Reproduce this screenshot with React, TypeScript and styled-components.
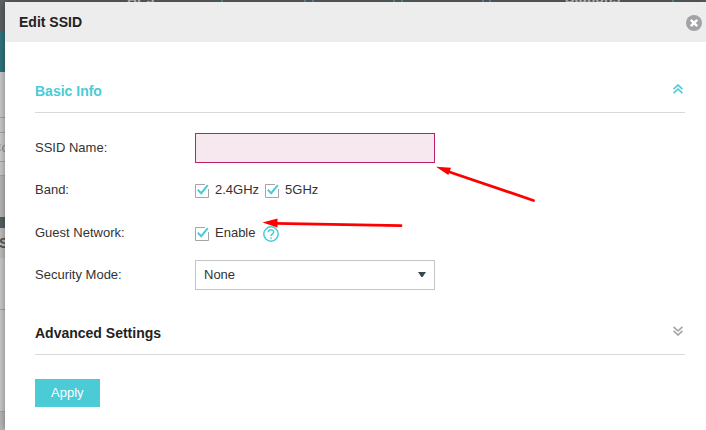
import React, { useState } from "react";
import styled, { createGlobalStyle } from "styled-components";

const accent = "#4acbd6";

const GlobalStyle = createGlobalStyle`
  *, *::before, *::after { box-sizing: border-box; }
  body {
    margin: 0;
    background: #c3c3c3;
    color: #333;
    font: 13px/16px "Liberation Sans", Arial, sans-serif;
  }
`;

const Page = styled.div`
  position: relative;
  min-height: 100vh;
  overflow: hidden;
  padding: 2px 0 0 5px;
`;

const Backdrop = styled.div`
  position: absolute;
  inset: 0;
  overflow: hidden;
  display: flex;
  flex-direction: column;
`;

const Strip = styled.div<{ $height: number; $color: string; $line?: boolean }>`
  flex: none;
  height: ${(p) => p.$height}px;
  background: ${(p) => p.$color};
  border-bottom: ${(p) => (p.$line ? "1px solid #a6a6a6" : "0")};
  overflow: hidden;
`;

const Status = styled(Strip)`
  position: relative;
`;

const StatusLabel = styled.span<{ $left: number }>`
  position: absolute;
  left: ${(p) => p.$left}px;
  bottom: 26px;
  color: #d0d0d0;
  font-size: 14px;
  font-weight: bold;
`;

const Tick = styled.span<{ $left: number }>`
  position: absolute;
  left: ${(p) => p.$left}px;
  top: 0;
  width: 2px;
  height: 2px;
  background: #5a9a9f;
`;

const Clipped = styled.span<{ $bold?: boolean }>`
  display: block;
  margin-left: ${(p) => (p.$bold ? -1 : -8)}px;
  padding-top: 7px;
  color: ${(p) => (p.$bold ? "#555" : "#8a8a8a")};
  font-size: ${(p) => (p.$bold ? 14 : 13)}px;
  font-weight: ${(p) => (p.$bold ? "bold" : "normal")};
`;

const Dialog = styled.section`
  position: relative;
  min-height: calc(100vh - 2px);
  background: #fff;
  box-shadow: 0 0 8px rgba(0, 0, 0, 0.4);
`;

const DialogHeader = styled.header`
  display: flex;
  align-items: center;
  justify-content: space-between;
  height: 40px;
  padding: 0 4px 0 14px;
  background: #ededed;
`;

const DialogTitle = styled.h1`
  margin: 0;
  color: #222;
  font-size: 14px;
  line-height: 16px;
`;

const IconButton = styled.button`
  display: flex;
  margin: 1px 0 0;
  padding: 0;
  border: 0;
  background: none;
  cursor: pointer;
`;

const Form = styled.form`
  padding: 29px 21px 22px 30px;
`;

const SectionHeader = styled.div`
  display: flex;
  align-items: flex-start;
  justify-content: space-between;
  height: 42px;
  padding: 12px 2px 0 0;
  border-bottom: 1px solid #d9d9d9;
`;

const SectionTitle = styled.h2<{ $open?: boolean }>`
  margin: 0;
  color: ${(p) => (p.$open ? accent : "#222")};
  font-size: 14px;
  line-height: 16px;
`;

const Fields = styled.div`
  display: grid;
  gap: 12px;
  padding: 20px 0 23px;
`;

const Row = styled.div`
  display: flex;
  align-items: center;
  min-height: 30px;
`;

const HelpRow = styled(Row)`
  padding-top: 1px;
  min-height: 31px;
`;

const RowLabel = styled.label`
  flex: none;
  width: 160px;
`;

const TextInput = styled.input`
  width: 240px;
  height: 30px;
  padding: 0 8px;
  border: 1px solid #c01f6a;
  border-radius: 0;
  outline: 0;
  background: #f7e8ef;
  font: inherit;
`;

const Checks = styled.div`
  display: flex;
  align-items: center;
  gap: 6px;
`;

const CheckLabel = styled.label`
  display: flex;
  align-items: center;
  gap: 6px;
  cursor: pointer;
`;

const CheckBox = styled.span`
  position: relative;
  display: flex;
  width: 14px;
  height: 14px;
  margin-top: 2px;
`;

const CheckInput = styled.input`
  position: absolute;
  inset: 0;
  margin: 0;
  opacity: 0;
  cursor: pointer;
`;

const SelectBox = styled.div`
  position: relative;
  width: 240px;
`;

const Select = styled.select`
  appearance: none;
  display: block;
  width: 100%;
  height: 30px;
  padding: 0 24px 0 8px;
  border: 1px solid #c4c4c4;
  border-radius: 0;
  background: #fff;
  color: #333;
  font: inherit;
`;

const Caret = styled.svg`
  position: absolute;
  right: 9px;
  top: 12px;
  pointer-events: none;
`;

const HelpButton = styled(IconButton)`
  margin: 2px 0 0 2px;
`;

const ApplyButton = styled.button`
  display: block;
  height: 28px;
  margin-top: 24px;
  padding: 0 16px;
  border: 0;
  background: ${accent};
  color: #fff;
  font: inherit;
  cursor: pointer;
`;

const Annotation = styled.svg`
  position: absolute;
  left: 0;
  top: 0;
  pointer-events: none;
`;

function DoubleChevron({ down = false }: { down?: boolean }) {
  return (
    <svg width="10" height="10" viewBox="0 0 10 10" fill="none" stroke={down ? "#a3a3a8" : accent} strokeWidth="1.6">
      {down ? <path d="M.6 .8 5 5 9.4 .8M.6 4.8 5 9 9.4 4.8" /> : <path d="M.6 5.2 5 1 9.4 5.2M.6 9.2 5 5 9.4 9.2" />}
    </svg>
  );
}

function Check({ label, id }: { label: string; id: string }) {
  const [on, setOn] = useState(true);
  return (
    <CheckLabel htmlFor={id}>
      <CheckBox>
        <CheckInput id={id} type="checkbox" checked={on} onChange={() => setOn(!on)} />
        <svg width="14" height="14" viewBox="0 0 14 14" fill="none">
          <path d={on ? "M10 .5H.5V13.5H13.5V5" : "M.5 .5H13.5V13.5H.5Z"} stroke="#a5a5a8" />
          {on && <path d="M2.8 5.8 6.2 9.2 12.8 1.2" stroke={accent} strokeWidth="2" />}
        </svg>
      </CheckBox>
      {label}
    </CheckLabel>
  );
}

export default function App() {
  const [name, setName] = useState("");
  return (
    <>
      <GlobalStyle />
      <Page>
        <Backdrop aria-hidden="true">
          <Status $height={32} $color="#5e6264">
            <StatusLabel $left={127}>APs</StatusLabel>
            <StatusLabel $left={565}>Stations</StatusLabel>
            {[221, 304, 312, 393, 401, 482, 489, 672].map((x) => (
              <Tick key={x} $left={x} />
            ))}
          </Status>
          <Strip $height={40} $color="#31757d" />
          <Strip $height={46} $color="#cbcbcb" $line />
          <Strip $height={15} $color="#cbcbcb" $line />
          <Strip $height={29} $color="#cfcfcf" $line>
            <Clipped>Co</Clipped>
          </Strip>
          <Strip $height={14} $color="#cbcbcb" $line />
          <Strip $height={41} $color="#b8b8b8" />
          <Strip $height={11} $color="#575f63" />
          <Strip $height={30} $color="#c0c0c0">
            <Clipped $bold>S</Clipped>
          </Strip>
          <Strip $height={52} $color="#cbcbcb" $line />
          <Strip $height={102} $color="#cbcbcb" $line />
          <Strip $height={18} $color="#b8b8b8" />
        </Backdrop>
        <Dialog role="dialog" aria-labelledby="dialog-title">
          <DialogHeader>
            <DialogTitle id="dialog-title">Edit SSID</DialogTitle>
            <IconButton type="button" aria-label="Close">
              <svg width="16" height="16" viewBox="0 0 16 16">
                <circle cx="8" cy="8" r="8" fill="#a3a3a6" />
                <path d="M4.8 4.8 11.2 11.2M11.2 4.8 4.8 11.2" stroke="#fff" strokeWidth="2.4" />
              </svg>
            </IconButton>
          </DialogHeader>
          <Form onSubmit={(e) => e.preventDefault()}>
            <SectionHeader>
              <SectionTitle $open>Basic Info</SectionTitle>
              <IconButton type="button" aria-label="Collapse Basic Info">
                <DoubleChevron />
              </IconButton>
            </SectionHeader>
            <Fields>
              <Row>
                <RowLabel htmlFor="ssid">SSID Name:</RowLabel>
                <TextInput id="ssid" value={name} onChange={(e) => setName(e.target.value)} />
              </Row>
              <Row role="group" aria-labelledby="band">
                <RowLabel as="span" id="band">Band:</RowLabel>
                <Checks>
                  <Check id="band-24" label="2.4GHz" />
                  <Check id="band-5" label="5GHz" />
                </Checks>
              </Row>
              <HelpRow role="group" aria-labelledby="guest">
                <RowLabel as="span" id="guest">Guest Network:</RowLabel>
                <Checks>
                  <Check id="guest-enable" label="Enable" />
                  <HelpButton type="button" aria-label="Help">
                    <svg width="16" height="16" viewBox="0 0 16 16" fill="none" stroke={accent} strokeWidth="1.5">
                      <circle cx="8" cy="8" r="7.2" />
                      <path d="M5.3 6.2C5.3 2.8 10.7 2.8 10.7 6.1C10.7 7.8 8 7.8 8 10M8 11.2V12.8" />
                    </svg>
                  </HelpButton>
                </Checks>
              </HelpRow>
              <Row>
                <RowLabel htmlFor="security">Security Mode:</RowLabel>
                <SelectBox>
                  <Select id="security" defaultValue="None">
                    <option>None</option>
                  </Select>
                  <Caret width="8" height="5" viewBox="0 0 8 5">
                    <path d="M0 0H8L4.6 5H3.4Z" fill="#37474f" />
                  </Caret>
                </SelectBox>
              </Row>
            </Fields>
            <SectionHeader>
              <SectionTitle>Advanced Settings</SectionTitle>
              <IconButton type="button" aria-label="Expand Advanced Settings">
                <DoubleChevron down />
              </IconButton>
            </SectionHeader>
            <ApplyButton type="submit">Apply</ApplyButton>
          </Form>
        </Dialog>
        <Annotation width="540" height="240" viewBox="0 0 540 240" fill="red" stroke="red" strokeLinecap="round">
          <path d="M448 171.5 533.5 200.5" strokeWidth="2.8" />
          <path d="M436 166.8 451 167.8 448.3 175Z" stroke="none" />
          <path d="M275 223.3 401 225.6" strokeWidth="2.8" />
          <path d="M262.5 222.6 277.5 218.6 277.5 227.4Z" stroke="none" />
        </Annotation>
      </Page>
    </>
  );
}
